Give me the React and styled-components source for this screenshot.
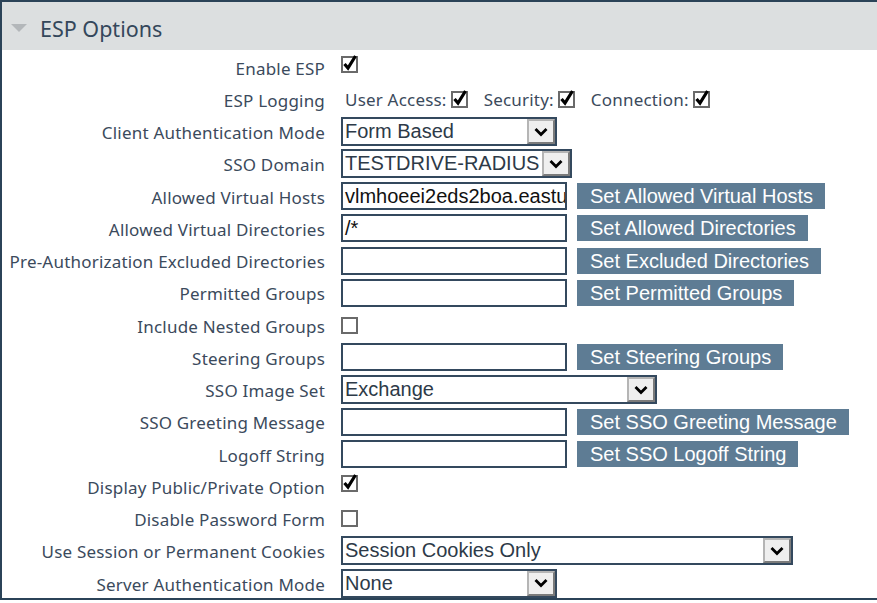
import React from "react";
import styled, { createGlobalStyle } from "styled-components";

const Global = createGlobalStyle`
    html, body { margin: 0; padding: 0; background: #fff; }
    body { font-family: "Noto Sans", sans-serif; }
`

const Panel = styled.div`
    width: 877px;
    height: 600px;
    box-sizing: border-box;
    border-top: 2px solid #2b4358;
    border-left: 2px solid #2b4358;
    border-bottom: 2px solid #2b4358;
    overflow: hidden;
`
const Header = styled.div`
    height: 48px;
    background: #dcdfe0;
    display: flex;
    align-items: center;
    gap: 13px;
    padding-left: 9px;
    box-sizing: border-box;
`
const Arrow = styled.div`
    width: 0;
    height: 0;
    border-left: 8px solid transparent;
    border-right: 8px solid transparent;
    border-top: 8px solid #b3b7ba;
    margin-top: 4px;
`
const Title = styled.h2`
    margin: 0;
    font-family: "Noto Sans", sans-serif;
    font-weight: 400;
    font-size: 21.5px;
    color: #34475b;
    padding-top: 4px;
`
const Form = styled.div`
    display: grid;
    grid-template-columns: 323px 1fr;
    grid-auto-rows: 32.25px;
    column-gap: 16px;
    padding-top: 1px;
`
const Label = styled.div`
    text-align: right;
    align-self: center;
    font-size: 17px;
    letter-spacing: 0.2px;
    color: #3b4a5c;
    white-space: nowrap;
    padding-top: 2px;
`
const Field = styled.div`
    display: flex;
    align-items: center;
    gap: 10px;
`
const Box = styled.span`
    position: relative;
    width: 17px;
    height: 17px;
    box-sizing: border-box;
    border: 2px solid #6a6a6a;
    display: inline-block;
    background: #fff;
    margin-left: ${p => p.$ml || 0}px;
    margin-bottom: ${p => p.$up ? 6 : 0}px;
    svg { position: absolute; left: 0; top: -4px; overflow: visible; }
`
const Inline = styled.span`
    display: inline-flex;
    align-items: center;
    font-size: 17px;
    letter-spacing: 0.2px;
    color: #3b4a5c;
    margin-right: 6px;
    margin-left: ${p => p.$first ? 4 : 0}px;
`
const Input = styled.div`
    width: 226px;
    height: 28px;
    box-sizing: border-box;
    border: 2px solid #34495e;
    font-family: "Liberation Sans", Arial, sans-serif;
    font-size: 20px;
    color: #111;
    padding: 0 2px;
    line-height: 24px;
    overflow: hidden;
    white-space: nowrap;
`
const Btn = styled.button`
    height: 26px;
    border: none;
    background: #5e7c94;
    color: #fff;
    font-family: "Liberation Sans", Arial, sans-serif;
    font-size: 20px;
    padding: 0 12px 0 13px;
    line-height: 26px;
    cursor: pointer;
`
const Select = styled.div`
    width: ${p => p.$w}px;
    height: 29px;
    box-sizing: border-box;
    border: 2px solid #34495e;
    display: flex;
    align-items: stretch;
    font-family: "Liberation Sans", Arial, sans-serif;
    font-size: 20px;
    color: #2d3a48;
`
const SelText = styled.span`
    flex: 1;
    padding-left: 2px;
    line-height: 25px;
    overflow: hidden;
    white-space: nowrap;
`
const SelBtn = styled.span`
    width: 28px;
    box-sizing: border-box;
    background: #efefef;
    border-top: 2px solid #b5b5b5;
    border-left: 2px solid #b5b5b5;
    border-right: 2px solid #7b7b7b;
    border-bottom: 2px solid #7b7b7b;
    display: flex;
    align-items: center;
    justify-content: center;
`

const Check = () => (
    <svg width="14" height="17" viewBox="0 0 14 17">
        <path d="M1.5 10 L5 14 L12.5 2" fill="none" stroke="#000" strokeWidth="3.2" />
    </svg>
)
const Chevron = () => (
    <svg width="14" height="10" viewBox="0 0 14 10">
        <path d="M1.5 2 L7 7.5 L12.5 2" fill="none" stroke="#000" strokeWidth="2.8" />
    </svg>
)

const CheckBox = ({on, up, ml}) => (
    <Box $up={up} $ml={ml}>{on && <Check />}</Box>
)
const Drop = ({w, value}) => (
    <Select $w={w}>
        <SelText>{value}</SelText>
        <SelBtn><Chevron /></SelBtn>
    </Select>
)

const rows = [
    {label: "Enable ESP", type: "check", on: true, up: true},
    {label: "ESP Logging", type: "logging"},
    {label: "Client Authentication Mode", type: "select", w: 216, value: "Form Based"},
    {label: "SSO Domain", type: "select", w: 231, value: "TESTDRIVE-RADIUS"},
    {label: "Allowed Virtual Hosts", type: "input", value: "vlmhoeei2eds2boa.eastu", btn: "Set Allowed Virtual Hosts"},
    {label: "Allowed Virtual Directories", type: "input", value: "/*", btn: "Set Allowed Directories"},
    {label: "Pre-Authorization Excluded Directories", type: "input", value: "", btn: "Set Excluded Directories"},
    {label: "Permitted Groups", type: "input", value: "", btn: "Set Permitted Groups"},
    {label: "Include Nested Groups", type: "check", on: false},
    {label: "Steering Groups", type: "input", value: "", btn: "Set Steering Groups"},
    {label: "SSO Image Set", type: "select", w: 316, value: "Exchange"},
    {label: "SSO Greeting Message", type: "input", value: "", btn: "Set SSO Greeting Message"},
    {label: "Logoff String", type: "input", value: "", btn: "Set SSO Logoff String"},
    {label: "Display Public/Private Option", type: "check", on: true, up: true},
    {label: "Disable Password Form", type: "check", on: false},
    {label: "Use Session or Permanent Cookies", type: "select", w: 452, value: "Session Cookies Only"},
    {label: "Server Authentication Mode", type: "select", w: 216, value: "None"},
]

const renderField = (r) => {
    if (r.type === "check") return <CheckBox on={r.on} up={r.up} />
    if (r.type === "select") return <Drop w={r.w} value={r.value} />
    if (r.type === "input") return (
        <>
            <Input>{r.value}</Input>
            <Btn>{r.btn}</Btn>
        </>
    )
    return (
        <>
            <Inline $first>User Access:<CheckBox on ml={4} /></Inline>
            <Inline>Security:<CheckBox on ml={4} /></Inline>
            <Inline>Connection:<CheckBox on ml={4} /></Inline>
        </>
    )
}

const App = () => {
    return (
        <Panel>
            <Global />
            <Header>
                <Arrow />
                <Title>ESP Options</Title>
            </Header>
            <Form>
                {rows.map((r) => (
                    <React.Fragment key={r.label}>
                        <Label>{r.label}</Label>
                        <Field>{renderField(r)}</Field>
                    </React.Fragment>
                ))}
            </Form>
        </Panel>
    )
}

export default App;
